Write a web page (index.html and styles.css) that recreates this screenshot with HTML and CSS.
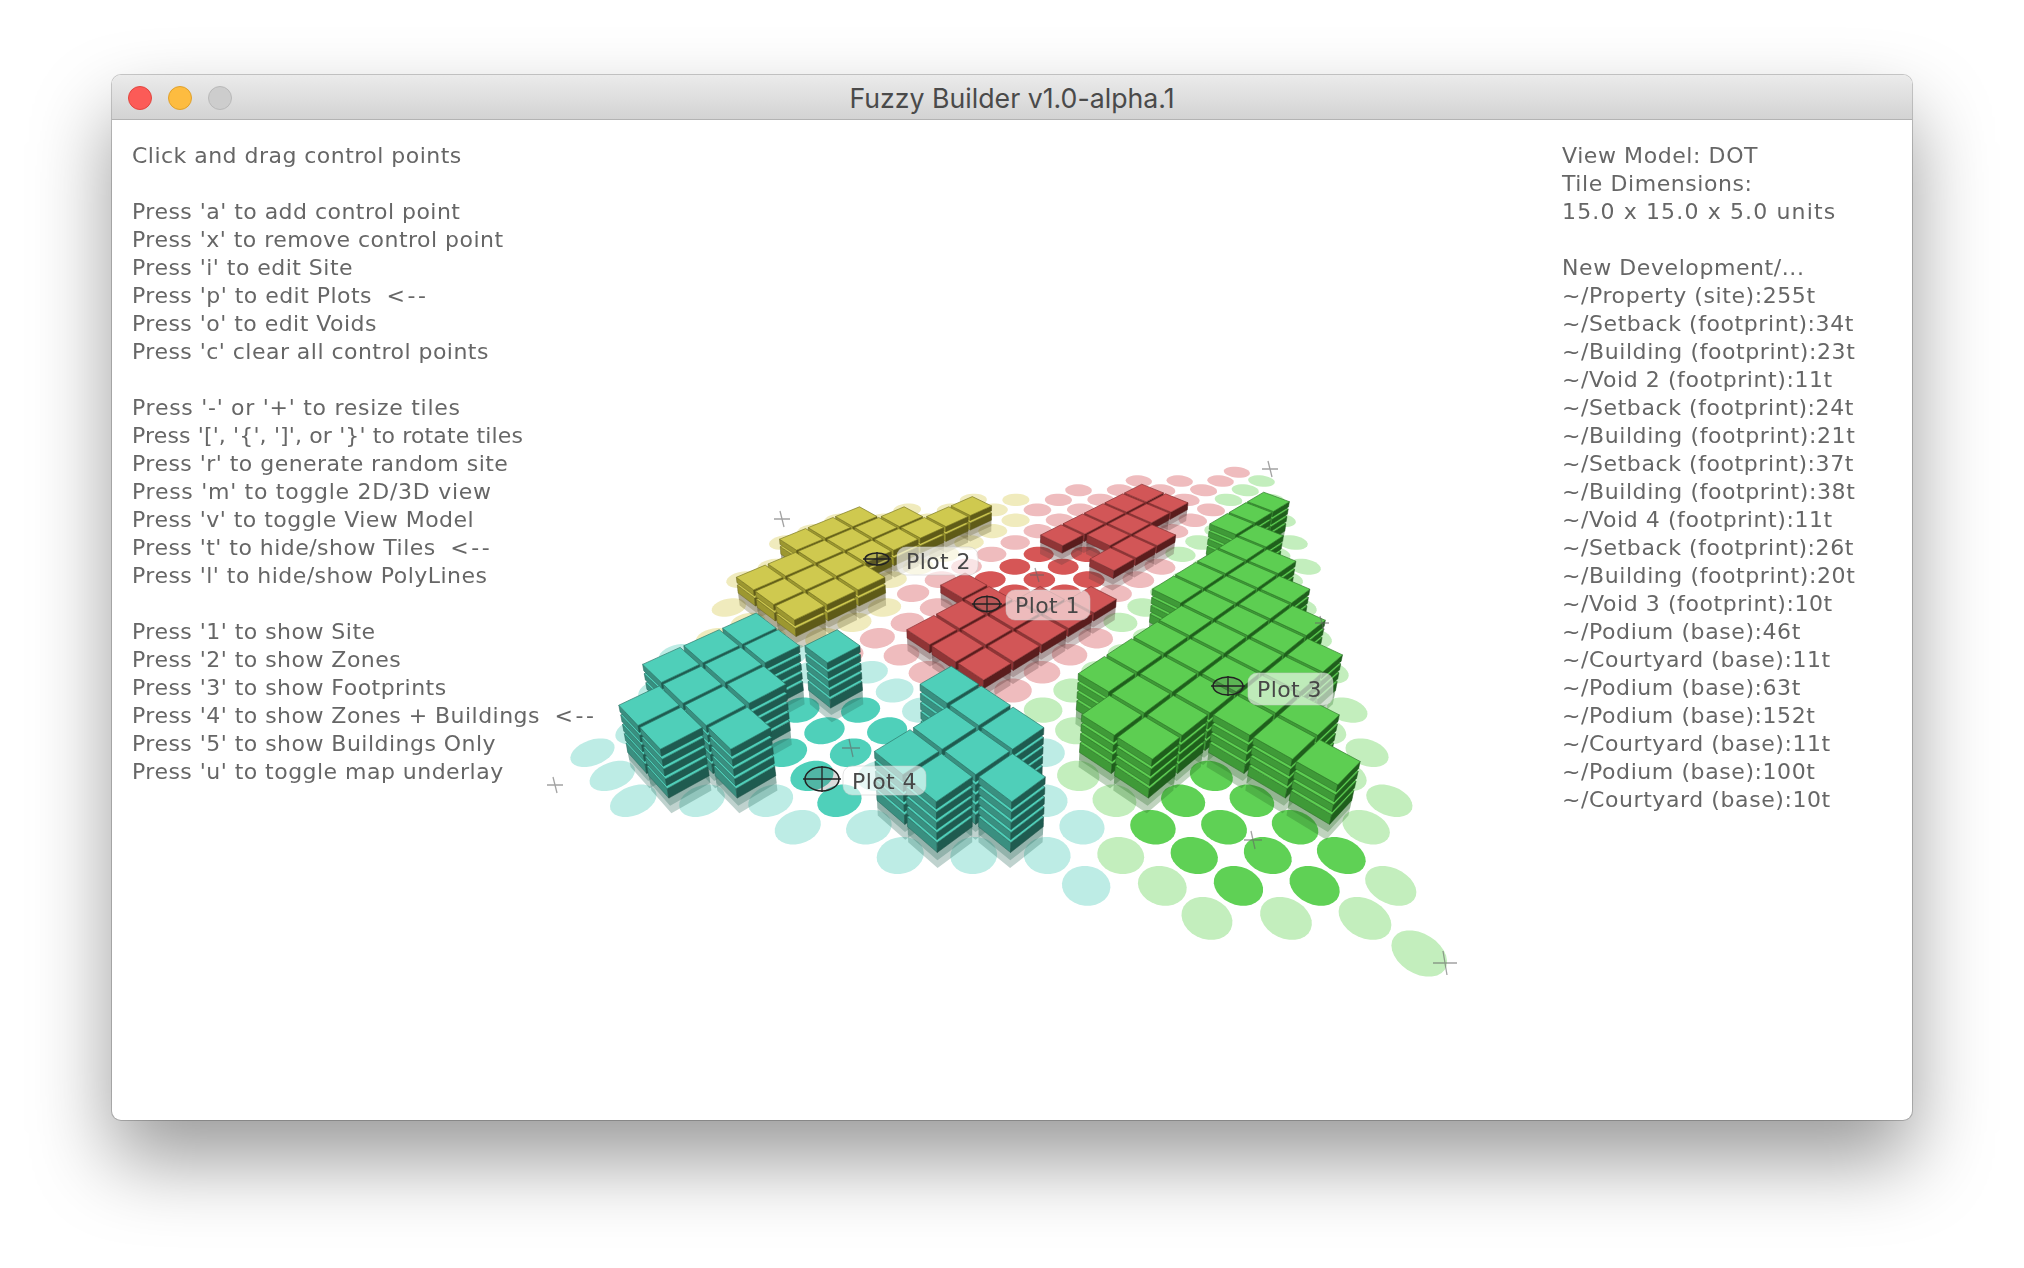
FILE: index.html
```html
<!DOCTYPE html>
<html lang="en">
<head>
<meta charset="utf-8">
<title>Fuzzy Builder v1.0-alpha.1</title>
<link rel="stylesheet" href="styles.css">
</head>
<body>
<main class="window">
  <header class="titlebar">
    <div class="lights">
      <span class="light close"></span>
      <span class="light minimize"></span>
      <span class="light zoom"></span>
    </div>
    <h1 class="title">Fuzzy Builder v1.0-alpha.1</h1>
  </header>
  <section class="canvas">
    <svg id="scene" class="scene" viewBox="112 120 1800 1000" aria-label="Site model"></svg>
    <div class="panel help">
      <p><span>Click and drag control points</span></p>
      <p>
        <span>Press 'a' to add control point</span>
        <span>Press 'x' to remove control point</span>
        <span>Press 'i' to edit Site</span>
        <span>Press 'p' to edit Plots <b class="arrow">&lt;--</b></span>
        <span>Press 'o' to edit Voids</span>
        <span>Press 'c' clear all control points</span>
      </p>
      <p>
        <span class="loose">Press '-' or '+' to resize tiles</span>
        <span class="tight">Press '[', '{', ']', or '}' to rotate tiles</span>
        <span>Press 'r' to generate random site</span>
        <span class="loose">Press 'm' to toggle 2D/3D view</span>
        <span>Press 'v' to toggle View Model</span>
        <span>Press 't' to hide/show Tiles <b class="arrow">&lt;--</b></span>
        <span>Press 'l' to hide/show PolyLines</span>
      </p>
      <p>
        <span>Press '1' to show Site</span>
        <span>Press '2' to show Zones</span>
        <span>Press '3' to show Footprints</span>
        <span>Press '4' to show Zones + Buildings <b class="arrow">&lt;--</b></span>
        <span>Press '5' to show Buildings Only</span>
        <span>Press 'u' to toggle map underlay</span>
      </p>
    </div>
    <div class="panel stats">
      <p>
        <span>View Model: DOT</span>
        <span>Tile Dimensions:</span>
        <span class="wide">15.0 x 15.0 x 5.0 units</span>
      </p>
      <p>
        <span>New Development/...</span>
        <span>~/Property (site):255t</span>
        <span>~/Setback (footprint):34t</span>
        <span>~/Building (footprint):23t</span>
        <span>~/Void 2 (footprint):11t</span>
        <span>~/Setback (footprint):24t</span>
        <span>~/Building (footprint):21t</span>
        <span>~/Setback (footprint):37t</span>
        <span>~/Building (footprint):38t</span>
        <span>~/Void 4 (footprint):11t</span>
        <span>~/Setback (footprint):26t</span>
        <span>~/Building (footprint):20t</span>
        <span>~/Void 3 (footprint):10t</span>
        <span>~/Podium (base):46t</span>
        <span>~/Courtyard (base):11t</span>
        <span>~/Podium (base):63t</span>
        <span>~/Podium (base):152t</span>
        <span>~/Courtyard (base):11t</span>
        <span>~/Podium (base):100t</span>
        <span>~/Courtyard (base):10t</span>
      </p>
    </div>
  </section>
</main>
<script src="scene.js"></script>
</body>
</html>
```
FILE: styles.css
```css
* { box-sizing: border-box; }
html, body { margin: 0; height: 100%; background: #fff; overflow: hidden; }
body { padding: 75px 112px 148px 112px; }

.window {
  height: 1045px;
  display: flex;
  flex-direction: column;
  border-radius: 9px;
  background: #fff;
  box-shadow: 0 0 0 1px rgba(0,0,0,.2), 0 40px 80px rgba(0,0,0,.4);
  overflow: hidden;
}
.titlebar {
  position: relative;
  flex: 0 0 45px;
  display: flex;
  align-items: center;
  justify-content: center;
  background: linear-gradient(#ebebeb, #d3d3d3);
  border-bottom: 1px solid #b3b3b3;
}
.lights {
  position: absolute;
  left: 16px;
  top: 11px;
  display: flex;
  gap: 16px;
}
.light { width: 24px; height: 24px; border-radius: 50%; border: 1px solid; }
.close { background: #fc5b57; border-color: #e2463f; }
.minimize { background: #fdbc40; border-color: #e0a12c; }
.zoom { background: #cdcdcd; border-color: #b9b9b9; }
.title {
  margin: 0;
  padding-top: 3px;
  font: 400 26.7px/1 Inter, sans-serif;
  color: #4a4a4a;
}
.canvas {
  position: relative;
  flex: 1;
  display: flex;
  justify-content: space-between;
  padding: 22px 0 0 20px;
}
.scene {
  position: absolute;
  left: 0;
  top: 0;
  width: 1800px;
  height: 1000px;
  filter: blur(.6px);
}
.panel {
  position: relative;
  font: 400 22px/28px "DejaVu Sans", sans-serif;
  color: #666;
  filter: blur(.4px);
}
.help { letter-spacing: .47px; }
.stats { width: 350px; letter-spacing: .58px; }
.panel p { margin: 0 0 28px; }
.panel span { display: block; white-space: pre; }
.panel .loose { letter-spacing: .72px; }
.panel .tight { letter-spacing: .14px; }
.panel .wide { letter-spacing: 1.14px; }
.arrow { font-weight: 400; letter-spacing: 2.6px; margin-left: 7px; }

/* scene */
.dot { stroke: none; }
.light-teal { fill: #bdece5; } .solid-teal { fill: #4fd0ba; }
.light-green { fill: #c3eebd; } .solid-green { fill: #5fd155; }
.light-red { fill: #efbcbe; } .solid-red { fill: #d65656; }
.light-yellow { fill: #f0ebbd; }

.under { stroke: none; opacity: .3; }
.top { stroke-width: .7; stroke-linejoin: round; }
.side { stroke-width: .5; }

.teal .top { fill: #4fcfb9; stroke: #2c7a6c; }
.teal .left { fill: #3a8f80; stroke: #24665a; }
.teal .right { fill: #1f5b50; stroke: #1c4f45; }
.teal .under { fill: #2a6a5e; }
.green .top { fill: #5dce52; stroke: #2f7d2a; }
.green .left { fill: #3f9a38; stroke: #2a6b26; }
.green .right { fill: #1f5f1c; stroke: #1d561a; }
.green .under { fill: #2c6c28; }
.red .top { fill: #d25657; stroke: #8a3233; }
.red .left { fill: #8f3536; stroke: #6a2526; }
.red .right { fill: #5a1d1d; stroke: #511a1a; }
.red .under { fill: #5c3a3a; }
.yellow .top { fill: #cfc94f; stroke: #7d7a24; }
.yellow .left { fill: #9c9730; stroke: #6b6720; }
.yellow .right { fill: #5f5b18; stroke: #585517; }
.yellow .under { fill: #5f5b30; }

.cross { stroke: #666; stroke-width: 1.3; fill: none; opacity: .6; }
.marker { fill: rgba(90,90,90,.22); stroke: #222; stroke-width: 1.5; }
.marker-line { stroke: #222; stroke-width: 1.3; fill: none; }
.tag { fill: rgba(255,255,255,.6); stroke: rgba(200,200,200,.5); stroke-width: 1; }
.tag-text { font: 400 22px "DejaVu Sans", sans-serif; fill: #474747; letter-spacing: .4px; }
```
FILE: scene.js
```js
(function () {
  var NS = 'http://www.w3.org/2000/svg';
  var svg = document.getElementById('scene');
  var VP = [970, 2550], M = 0.0065, INSET = 0.045;

  function W(i, j) { return 1 + 0.0387 * (i + j); }
  function P(i, j, z) {
    var w = W(i, j);
    var gx = (-1.4 * i + 80.6 * j + 1419) / w;
    var gy = (0.46 * (i + j) + 953) / w;
    if (!z) return [gx, gy];
    var f = w / (w - M * z);
    return [VP[0] + (gx - VP[0]) * f, VP[1] + (gy - VP[1]) * f];
  }
  function el(name, attrs, parent) {
    var e = document.createElementNS(NS, name);
    for (var k in attrs) e.setAttribute(k, attrs[k]);
    (parent || svg).appendChild(e);
    return e;
  }
  function poly(points, cls, parent) {
    return el('polygon', {
      'class': cls,
      points: points.map(function (p) { return p[0].toFixed(1) + ',' + p[1].toFixed(1); }).join(' ')
    }, parent);
  }

  var SITE = [[21, 1.1], [12.4, 15.3], [-0.5, 0.05], [14.7, -9.07]];
  function inside(i, j) {
    var n = SITE.length, c = false;
    for (var a = 0, b = n - 1; a < n; b = a++) {
      var A = SITE[a], B = SITE[b];
      if ((A[1] > j) !== (B[1] > j) && i < (B[0] - A[0]) * (j - A[1]) / (B[1] - A[1]) + A[0]) c = !c;
    }
    return c;
  }

  var PLOTS = [
    { name: 'red', at: [13.2, 2.07] },
    { name: 'yellow', at: [17.15, 1.38] },
    { name: 'green', at: [6.44, 3.74] },
    { name: 'teal', at: [10.8, -4.9] }
  ];
  function zone(i, j) {
    var best = null, bd = 1e9;
    PLOTS.forEach(function (p) {
      var d = (p.at[0] - i) * (p.at[0] - i) + (p.at[1] - j) * (p.at[1] - j);
      if (d < bd) { bd = d; best = p.name; }
    });
    return best;
  }

  function runs(list) { // [i, jFrom, jTo]
    var out = [];
    list.forEach(function (r) { for (var j = r[1]; j <= r[2]; j++) out.push([r[0], j]); });
    return out;
  }
  var TILES = {
    red: runs([[11, 0, 4], [12, 0, 3], [13, 0, 2], [14, 2, 2], [12, 6, 8], [13, 7, 10], [14, 6, 10]]),
    yellow: runs([[16, -2, 0], [17, -2, 5], [18, -2, 3], [19, 0, 2]]),
    green: runs([[3, 2, 2], [4, 2, 3], [5, 2, 5], [6, 0, 6], [7, 0, 7], [8, 1, 8], [9, 5, 9], [10, 9, 11]]),
    teal: [[13,-7],[14,-7],[12,-6],[13,-6],[14,-6],[15,-6],[13,-5],[14,-5],[15,-5],[14,-4],[15,-4],[13,-3],
           [8,-4],[9,-4],[7,-3],[8,-3],[9,-3],[8,-2],[9,-2],[10,-2]]
  };
  var LEVELS = { red: 1, yellow: 2, green: 4, teal: 5 };
  var BRIGHT = {
    teal: [[13,-4],[12,-4],[12,-5],[11,-5],[11,-4],[12,-3],[11,-3],[10,-5]],
    green: [[5,-1],[4,0],[3,1],[4,-1],[3,0],[2,1],[3,-1],[2,0],[5,0],[4,1],[5,1]],
    red: [[13,3],[12,4],[14,3],[13,4],[12,5],[14,4],[13,5],[14,5],[13,6]]
  };
  function key(i, j) { return i + ':' + j; }
  var taken = {}, bright = {};
  Object.keys(TILES).forEach(function (k) { TILES[k].forEach(function (t) { taken[key(t[0], t[1])] = k; }); });
  Object.keys(BRIGHT).forEach(function (k) { BRIGHT[k].forEach(function (t) { bright[key(t[0], t[1])] = k; }); });

  // ground dots, each a projected circle
  var dots = el('g', { 'class': 'dots' });
  for (var i = -2; i <= 24; i++) {
    for (var j = -12; j <= 18; j++) {
      if (taken[key(i, j)] || !inside(i, j)) continue;
      var pts = [], z = zone(i, j);
      for (var a = 0; a < 28; a++) {
        var t = a / 28 * Math.PI * 2;
        pts.push(P(i + 0.45 * Math.cos(t), j + 0.45 * Math.sin(t)));
      }
      poly(pts, 'dot ' + (bright[key(i, j)] ? 'solid-' : 'light-') + z, dots);
    }
  }

  // tiles, painted from the far row to the near one
  var stacks = [];
  Object.keys(TILES).forEach(function (k) {
    TILES[k].forEach(function (t) { stacks.push({ i: t[0], j: t[1], zone: k }); });
  });
  stacks.sort(function (a, b) { return (b.i + b.j) - (a.i + a.j); });
  stacks.forEach(function (s) {
    var g = el('g', { 'class': s.zone });
    var i0 = s.i - 0.5 + INSET, i1 = s.i + 0.5 - INSET, j0 = s.j - 0.5 + INSET, j1 = s.j + 0.5 - INSET;
    [-1.6, -0.8].forEach(function (d) {
      poly([P(i1, j0, 0.4), P(i0, j0, 0.4), P(i0, j1, 0.4), P(i0, j1, d), P(i0, j0, d), P(i1, j0, d)], 'under', g);
    });
    var n = LEVELS[s.zone];
    for (var k = 0; k < n; k++) {
      var lo = k === 0 ? 0 : k + 0.3, hi = k + 1;
      poly([P(i1, j0, lo), P(i0, j0, lo), P(i0, j0, hi), P(i1, j0, hi)], 'side left', g);
      poly([P(i0, j0, lo), P(i0, j1, lo), P(i0, j1, hi), P(i0, j0, hi)], 'side right', g);
      poly([P(i0, j0, hi), P(i1, j0, hi), P(i1, j1, hi), P(i0, j1, hi)], 'top', g);
    }
  });

  // control points
  [[782,519,8],[1270,469,8],[1445,963,12],[555,785,8],[1037,575,7],[851,748,9],[1253,840,9],[1322,623,7]].forEach(function (c) {
    el('path', {
      'class': 'cross',
      d: 'M' + (c[0] - c[2]) + ' ' + c[1] + 'H' + (c[0] + c[2]) +
         'M' + (c[0] - 2) + ' ' + (c[1] - c[2]) + 'L' + (c[0] + 2) + ' ' + (c[1] + c[2])
    });
  });

  // plot markers and labels
  [
    { t: 'Plot 1', c: [987, 604, 13, 7.5], r: [1006, 590, 84, 30] },
    { t: 'Plot 2', c: [877, 559, 12, 6], r: [897, 547, 81, 28] },
    { t: 'Plot 3', c: [1228, 686, 15, 9], r: [1248, 673, 85, 32] },
    { t: 'Plot 4', c: [822, 779, 17, 12], r: [843, 766, 83, 29] }
  ].forEach(function (p) {
    el('ellipse', { 'class': 'marker', cx: p.c[0], cy: p.c[1], rx: p.c[2], ry: p.c[3] });
    el('path', {
      'class': 'marker-line',
      d: 'M' + (p.c[0] - p.c[2] - 2) + ' ' + p.c[1] + 'H' + (p.c[0] + p.c[2] + 2) +
         'M' + p.c[0] + ' ' + (p.c[1] - p.c[3] - 1) + 'V' + (p.c[1] + p.c[3] + 1)
    });
    el('rect', { 'class': 'tag', x: p.r[0], y: p.r[1], width: p.r[2], height: p.r[3], rx: 9 });
    var text = el('text', { 'class': 'tag-text', x: p.r[0] + 9, y: p.r[1] + p.r[3] / 2 + 8 });
    text.textContent = p.t;
  });
})();
```
